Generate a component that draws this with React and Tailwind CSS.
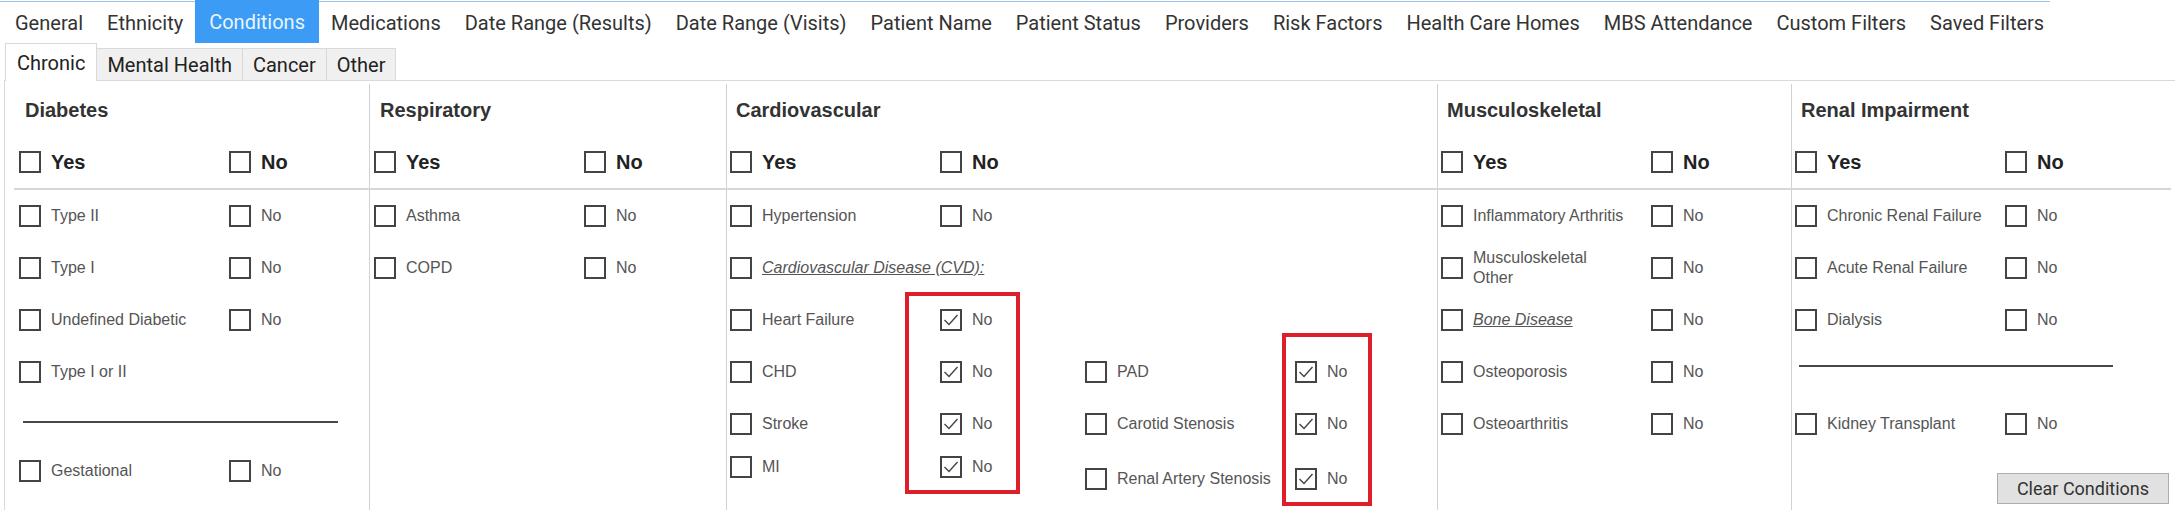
import React from "react";

const tabs = [
  "General",
  "Ethnicity",
  "Conditions",
  "Medications",
  "Date Range (Results)",
  "Date Range (Visits)",
  "Patient Name",
  "Patient Status",
  "Providers",
  "Risk Factors",
  "Health Care Homes",
  "MBS Attendance",
  "Custom Filters",
  "Saved Filters",
];

const subTabs = ["Mental Health", "Cancer", "Other"];

const Box = ({ checked }) => (
  <span className="w-[22px] h-[22px] border-2 border-[#444] bg-white flex items-center justify-center shrink-0">
    {checked && (
      <svg width="18" height="18" viewBox="0 0 18 18" fill="none">
        <path d="M2.5 9 L7 13.5 L15.5 4" stroke="#444" strokeWidth="1.4" />
      </svg>
    )}
  </span>
);

const Item = ({ label, checked, wide, italic, bold }) => (
  <div className={`flex items-center gap-[10px] ${wide ? "w-[210px]" : ""}`}>
    <Box checked={checked} />
    <span
      className={
        bold
          ? "text-[20px] font-bold text-[#222]"
          : `text-[16px] text-[#555] leading-[20px] whitespace-nowrap ${italic ? "italic underline" : ""}`
      }
    >
      {label}
    </span>
  </div>
);

const Row = ({ label, no = true, checked = false, italic = false, h = "h-[52px]" }) => (
  <div className={`flex items-center ${h}`}>
    <Item label={label} wide italic={italic} />
    {no && <Item label="No" checked={checked} />}
  </div>
);

const Heading = ({ title }) => (
  <div className="h-[52px] flex items-center ml-[6px] text-[20px] font-bold text-[#333]">{title}</div>
);

const YesNo = () => (
  <div className="h-[52px] flex items-center">
    <Item label="Yes" bold wide />
    <Item label="No" bold />
  </div>
);

const cols = [
  { title: "Diabetes", cls: "w-[364px] pl-[14px]" },
  { title: "Respiratory", cls: "w-[357px] pl-[4px] border-l border-[#d2d2d2]" },
  { title: "Cardiovascular", cls: "w-[711px] pl-[3px] border-l border-[#d2d2d2]" },
  { title: "Musculoskeletal", cls: "w-[354px] pl-[3px] border-l border-[#d2d2d2]" },
  { title: "Renal Impairment", cls: "flex-1 pl-[3px] border-l border-[#d2d2d2]" },
];

export default function App() {
  return (
    <div className="w-[2175px] h-[510px] bg-white overflow-hidden font-['Liberation_Sans',Arial,sans-serif]">
      <div className="pt-px">
        <div className="flex h-[42px] w-[2050px] border-t border-[#9cc2e8] pl-[3px] font-['Roboto','Segoe_UI',sans-serif] text-[20px] text-[#333]">
          {tabs.map((t) =>
            t === "Conditions" ? (
              <div key={t} className="-mt-[2px] px-[14px] flex items-center bg-[#3b9bf5] text-[#eaf5ff]">
                {t}
              </div>
            ) : (
              <div key={t} className="px-[12px] flex items-center whitespace-nowrap">
                {t}
              </div>
            )
          )}
        </div>
      </div>

      <div className="flex items-end h-[37px] pl-[5px] font-['Roboto','Segoe_UI',sans-serif] text-[20px] text-[#222]">
        <div className="relative z-10 -mb-px h-[38px] px-[11px] flex items-center bg-white border border-b-0 border-[#d9d9d9]">
          Chronic
        </div>
        {subTabs.map((t) => (
          <div
            key={t}
            className="-ml-px h-[32px] px-[10px] flex items-center bg-[#f0f0f0] border border-b-0 border-[#d9d9d9]"
          >
            {t}
          </div>
        ))}
      </div>

      <div className="ml-[4px] h-[430px] border-l border-t border-[#d9d9d9] pt-[3px]">
        <div className="flex h-[104px]">
          {cols.map((c) => (
            <div key={c.title} className={c.cls}>
              <Heading title={c.title} />
              <YesNo />
            </div>
          ))}
        </div>
        <div className="h-[2px] bg-[#d6d6d6] ml-[9px] mr-[4px]" />
        <div className="flex h-[321px]">
          <div className={cols[0].cls}>
            <Row label="Type II" />
            <Row label="Type I" />
            <Row label="Undefined Diabetic" />
            <Row label="Type I or II" no={false} />
            <div className="h-[47px] flex items-center">
              <div className="ml-[4px] w-[315px] h-[2px] bg-[#484848]" />
            </div>
            <Row label="Gestational" />
          </div>

          <div className={cols[1].cls}>
            <Row label="Asthma" />
            <Row label="COPD" />
          </div>

          <div className={`${cols[2].cls} relative`}>
            <Row label="Hypertension" />
            <Row label="Cardiovascular Disease (CVD):" no={false} italic />
            <div className="flex">
              <div className="w-[355px]">
                <Row label="Heart Failure" checked />
                <Row label="CHD" checked />
                <Row label="Stroke" checked />
                <Row label="MI" checked h="h-[34px]" />
              </div>
              <div>
                <div className="h-[52px]" />
                <Row label="PAD" checked />
                <Row label="Carotid Stenosis" checked />
                <Row label="Renal Artery Stenosis" checked h="h-[58px]" />
              </div>
            </div>
            <div className="absolute left-[178px] top-[102px] w-[115px] h-[202px] border-4 border-[#dc1f2a]" />
            <div className="absolute left-[555px] top-[143px] w-[90px] h-[173px] border-4 border-[#dc1f2a]" />
          </div>

          <div className={cols[3].cls}>
            <Row label="Inflammatory Arthritis" />
            <Row
              label={
                <>
                  Musculoskeletal
                  <br />
                  Other
                </>
              }
            />
            <Row label="Bone Disease" italic />
            <Row label="Osteoporosis" />
            <Row label="Osteoarthritis" />
          </div>

          <div className={`${cols[4].cls} pr-[6px]`}>
            <Row label="Chronic Renal Failure" />
            <Row label="Acute Renal Failure" />
            <Row label="Dialysis" />
            <div className="h-[52px] pt-[19px]">
              <div className="ml-[4px] w-[314px] h-[2px] bg-[#484848]" />
            </div>
            <Row label="Kidney Transplant" />
            <div className="flex justify-end mt-[23px]">
              <button className="w-[172px] h-[31px] bg-[#e1e1e1] border border-[#adadad] text-[18px] text-[#333] font-['Roboto','Segoe_UI',sans-serif] flex items-center justify-center">
                Clear Conditions
              </button>
            </div>
          </div>
        </div>
      </div>
    </div>
  );
}
